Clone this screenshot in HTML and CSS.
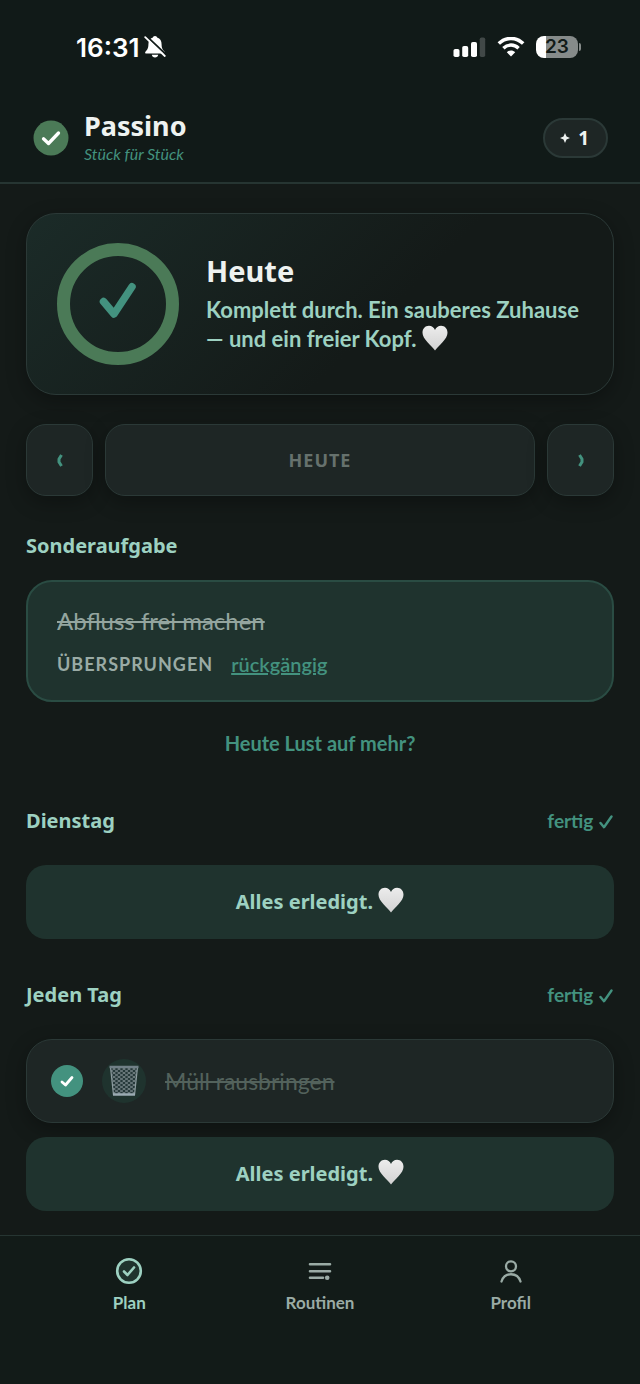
FILE: index.html
```html
<!DOCTYPE html>
<html lang="de">
<head>
    <meta charset="UTF-8">
    <meta name="viewport" content="width=device-width, initial-scale=1.0">
    <title>Passino</title>
    <link rel="stylesheet" href="styles.css">
</head>
<body>
    <!-- Shared shapes -->
    <svg class="defs" aria-hidden="true">
        <defs>
            <linearGradient id="heartFill" x1="0" y1="0" x2="0" y2="1">
                <stop offset="0" stop-color="#ececec"/>
                <stop offset="1" stop-color="#d2d2d2"/>
            </linearGradient>
            <pattern id="mesh" width="5" height="4" patternUnits="userSpaceOnUse">
                <path d="M0 0l5 4M5 0L0 4" stroke="#849296" stroke-width="0.800"/>
            </pattern>
            <symbol id="heart" viewBox="0 0 26 26">
                <path d="M13 25.500C12 23.800 8.500 20.800 5.500 17.300C2.500 13.900 0.500 10.900 0.500 7.700C0.500 3.600 3.300 0.800 6.900 0.800C9.800 0.800 12 2.500 13 4.900C14 2.500 16.200 0.800 19.100 0.800C22.700 0.800 25.500 3.600 25.500 7.700C25.500 10.900 23.500 13.900 20.500 17.300C17.500 20.800 14 23.800 13 25.500Z" fill="url(#heartFill)"/>
            </symbol>
            <symbol id="tick" viewBox="0 0 14 14">
                <path d="M1.500 8L5 12.200L12.500 1.500" fill="none" stroke="currentColor" stroke-width="2.400" stroke-linecap="round" stroke-linejoin="round"/>
            </symbol>
        </defs>
    </svg>

    <div class="status-bar">
        <div class="status-group">
            <span class="clock">16:31</span>
            <svg width="22" height="24" viewBox="0 0 22 24" aria-hidden="true">
                <path d="M11 1C9.600 1 9 1.800 8.900 2.600C5.700 3.500 4.400 6 4.400 9.500C4.400 14 2.700 15.200 1.400 16.700C0.800 17.600 1.200 18.500 2.300 18.500H19.700C20.800 18.500 21.200 17.600 20.600 16.700C19.300 15.200 17.600 14 17.600 9.500C17.600 6 16.300 3.500 13.100 2.600C13 1.800 12.400 1 11 1Z" fill="#fff"/>
                <path d="M7.800 19.700H14.200C13.900 21.500 12.700 22.500 11 22.500S8.100 21.500 7.800 19.700Z" fill="#fff"/>
                <path d="M2.600 1.200L22 19.600" stroke="#111a18" stroke-width="2"/>
                <path d="M1.200 2.200L20.800 21" stroke="#fff" stroke-width="1.800" stroke-linecap="round"/>
            </svg>
        </div>
        <div class="status-group status-right">
            <svg width="33" height="20" viewBox="0 0 33 20" aria-hidden="true">
                <rect x="0.500" y="12" width="6" height="8" rx="1.800" fill="#fff"/>
                <rect x="9.200" y="9" width="6" height="11" rx="1.800" fill="#fff"/>
                <rect x="18" y="5" width="6" height="15" rx="1.800" fill="#fff"/>
                <rect x="26.700" y="0.500" width="5.500" height="19.500" rx="1.800" fill="#414847"/>
            </svg>
            <svg width="28" height="20" viewBox="0 0 28 20" aria-hidden="true">
                <path d="M1.800 6.600C8.800 -0.300 19.200 -0.300 26.200 6.600" fill="none" stroke="#fff" stroke-width="3.500"/>
                <path d="M6.400 11.200C10.800 7 17.200 7 21.600 11.200" fill="none" stroke="#fff" stroke-width="3.400"/>
                <path d="M9.800 15.200C12.200 12.900 15.800 12.900 18.200 15.200L14 19.500Z" fill="#fff"/>
            </svg>
            <span class="battery"><span class="battery-level">23</span></span>
        </div>
    </div>

    <header class="app-header">
        <svg class="logo" width="36" height="36" viewBox="0 0 36 36" aria-hidden="true">
            <circle cx="18" cy="18" r="17.500" fill="#4b7a57"/>
            <path d="M10.500 18.800L15.500 23.500L25.500 13" fill="none" stroke="#fff" stroke-width="3.300" stroke-linecap="round" stroke-linejoin="round"/>
        </svg>
        <div class="brand">
            <h1>Passino</h1>
            <p>Stück für Stück</p>
        </div>
        <button class="points" type="button">
            <svg width="10" height="10" viewBox="0 0 10 10" aria-hidden="true">
                <path d="M5 0L6.500 3.500L10 5L6.500 6.500L5 10L3.500 6.500L0 5L3.500 3.500Z" fill="#eef2f0"/>
            </svg>
            1
        </button>
    </header>

    <main>
        <section class="hero">
            <svg class="ring" width="122" height="122" viewBox="0 0 122 122" aria-hidden="true">
                <circle cx="61" cy="61" r="54.500" fill="none" stroke="#4b7a57" stroke-width="13"/>
                <path d="M46.500 58.500L57 71L75 43.800" fill="none" stroke="#43927f" stroke-width="7.500" stroke-linecap="round" stroke-linejoin="round"/>
            </svg>
            <div>
                <h2>Heute</h2>
                <p>Komplett durch. Ein sauberes Zuhause — und ein freier Kopf. <svg class="heart" aria-label="Herz"><use href="#heart"/></svg></p>
            </div>
        </section>

        <div class="day-nav">
            <button class="arrow" type="button" aria-label="Vorheriger Tag">
                <svg width="8" height="16" viewBox="0 0 8 16" aria-hidden="true"><path d="M5.500 3L3 7V10L5.500 14" fill="none" stroke="currentColor" stroke-width="3" stroke-linejoin="round"/></svg>
            </button>
            <button class="today" type="button" disabled>HEUTE</button>
            <button class="arrow" type="button" aria-label="Nächster Tag">
                <svg width="8" height="16" viewBox="0 0 8 16" aria-hidden="true"><path d="M2.500 3L5 7V10L2.500 14" fill="none" stroke="currentColor" stroke-width="3" stroke-linejoin="round"/></svg>
            </button>
        </div>

        <section class="special">
            <h3>Sonderaufgabe</h3>
            <div class="special-card">
                <s>Abfluss frei machen</s>
                <div class="special-meta">
                    <span class="skipped">ÜBERSPRUNGEN</span>
                    <a href="#">rückgängig</a>
                </div>
            </div>
            <a class="more" href="#">Heute Lust auf mehr?</a>
        </section>

        <section class="group">
            <div class="group-head">
                <h3>Dienstag</h3>
                <span class="state">fertig <svg class="tick" aria-hidden="true"><use href="#tick"/></svg></span>
            </div>
            <p class="all-done">Alles erledigt. <svg class="heart" aria-label="Herz"><use href="#heart"/></svg></p>
        </section>

        <section class="group">
            <div class="group-head">
                <h3>Jeden Tag</h3>
                <span class="state">fertig <svg class="tick" aria-hidden="true"><use href="#tick"/></svg></span>
            </div>
            <label class="task">
                <span class="check">
                    <input type="checkbox" checked>
                    <svg width="14" height="14" viewBox="0 0 14 14" aria-hidden="true"><path d="M2 8L5.500 11L12 3.500" fill="none" stroke="#fff" stroke-width="2.800" stroke-linecap="round" stroke-linejoin="round"/></svg>
                </span>
                <span class="task-icon">
                    <svg width="30" height="32" viewBox="0 0 30 32" aria-hidden="true">
                        <path d="M1.500 2H28.500L25.500 30H4.500Z" fill="#26393a"/>
                        <path d="M1.500 2H28.500L25.500 30H4.500Z" fill="url(#mesh)"/>
                        <path d="M1.500 2L4.500 30M28.500 2L25.500 30" stroke="#8d9ca0" stroke-width="1.200"/>
                        <path d="M0.500 2H29.500" stroke="#718087" stroke-width="2.500"/>
                        <path d="M4 29.500H26" stroke="#9babb3" stroke-width="2.500"/>
                    </svg>
                </span>
                <s>Müll rausbringen</s>
            </label>
            <p class="all-done">Alles erledigt. <svg class="heart" aria-label="Herz"><use href="#heart"/></svg></p>
        </section>
    </main>

    <nav class="tab-bar">
        <a class="tab active" href="#">
            <svg width="28" height="28" viewBox="0 0 28 28" fill="none" stroke="currentColor" stroke-linecap="round" stroke-linejoin="round" aria-hidden="true">
                <circle cx="14" cy="14" r="11.800" fill="#1f332e" stroke-width="2.600"/>
                <path d="M9 14.500L12.500 18L19 10.500" stroke-width="2.600"/>
            </svg>
            Plan
        </a>
        <a class="tab" href="#">
            <svg width="28" height="28" viewBox="0 0 28 28" fill="none" stroke="currentColor" stroke-linecap="round" aria-hidden="true">
                <path d="M4 7.300H24M4 14.200H24M4 20.700H17" stroke-width="2.600"/>
                <circle cx="21.200" cy="20.700" r="2.300" fill="currentColor" stroke="none"/>
            </svg>
            Routinen
        </a>
        <a class="tab" href="#">
            <svg width="28" height="28" viewBox="0 0 28 28" fill="none" stroke="currentColor" stroke-linecap="round" aria-hidden="true">
                <circle cx="14" cy="9.300" r="5" stroke-width="2.300"/>
                <path d="M4.500 24.500C7.500 14.800 20.500 14.800 23.500 24.500" stroke-width="2.300"/>
            </svg>
            Profil
        </a>
    </nav>
</body>
</html>
```
FILE: styles.css
```css
* {
    box-sizing: border-box;
}
body {
    display: flex;
    flex-direction: column;
    min-height: 100vh;
    margin: 0;
    background-color: #141a18;
    color: #eef2f0;
    font-family: Lato, "Noto Sans", sans-serif;
    font-size: 22px;
}
h1, h2, h3, p {
    margin: 0;
}
h1, h2, h3, .today, .all-done {
    font-family: "Noto Sans", sans-serif;
    font-weight: 700;
}
button {
    font-family: inherit;
    color: inherit;
}
svg {
    flex: none;
}
.defs {
    position: absolute;
    width: 0;
    height: 0;
}
.heart {
    width: 26px;
    height: 26px;
    vertical-align: -4px;
}

/* Status bar */
.status-bar {
    display: flex;
    justify-content: space-between;
    align-items: center;
    height: 94px;
    padding: 0 59px 0 76px;
    background-color: #111a18;
}
.status-group {
    display: flex;
    align-items: center;
    gap: 5px;
}
.status-right {
    gap: 11px;
}
.clock {
    font-family: Inter, sans-serif;
    font-size: 26px;
    font-weight: 600;
    color: #fff;
}
.battery {
    display: flex;
    align-items: center;
    gap: 1px;
}
.battery::after {
    content: "";
    width: 2px;
    height: 8px;
    border-radius: 0 4px 4px 0;
    background-color: #868b8a;
}
.battery-level {
    width: 42px;
    border-radius: 8px;
    background: linear-gradient(to right, #fff 23%, #868b8a 23%);
    color: #111a18;
    font-family: Inter, sans-serif;
    font-size: 19px;
    font-weight: 600;
    line-height: 22px;
    text-align: center;
}

/* Header */
.app-header {
    display: flex;
    align-items: center;
    gap: 15px;
    height: 90px;
    padding: 0 32px 0 33px;
    border-bottom: 2px solid #263532;
    background-color: #111a18;
}
.brand {
    flex: 1;
}
.brand h1 {
    font-size: 27px;
    line-height: 32px;
}
.brand p {
    color: #43927f;
    font-size: 16px;
    font-style: italic;
    line-height: 24px;
}
.points {
    display: flex;
    align-items: center;
    gap: 8px;
    height: 40px;
    padding: 0 17px 0 15px;
    border: 2px solid #2b3937;
    border-radius: 20px;
    background-color: #1e2625;
    font-family: "Noto Sans", sans-serif;
    font-size: 19px;
    font-weight: 700;
}

/* Content */
main {
    flex: 1;
    padding: 29px 26px 24px;
}
.hero {
    display: flex;
    align-items: center;
    gap: 27px;
    padding: 29px 30px;
    border: 1px solid #2b3937;
    border-radius: 30px;
    background: linear-gradient(135deg, #1b2b28, #141a18 60%);
    box-shadow: 0 6px 20px rgba(0, 0, 0, 0.3);
}
.hero h2 {
    margin-bottom: 8px;
    font-size: 29px;
    line-height: 32px;
}
.hero p {
    color: #9dd1c1;
    font-weight: 700;
    line-height: 29px;
}
.day-nav {
    display: flex;
    gap: 12px;
    margin-top: 29px;
}
.day-nav button {
    display: flex;
    align-items: center;
    justify-content: center;
    height: 72px;
    border: 1px solid #2b3937;
    border-radius: 20px;
    background-color: #1e2625;
    box-shadow: 0 6px 20px rgba(0, 0, 0, 0.3);
}
.day-nav .arrow {
    width: 67px;
    color: #43927f;
}
.day-nav .today {
    flex: 1;
    color: #66716d;
    font-size: 18px;
    letter-spacing: 1px;
}
h3 {
    color: #9dd1c1;
    font-size: 20px;
    line-height: 28px;
}
.special {
    display: flex;
    flex-direction: column;
    margin-top: 36px;
}
.special-card {
    margin-top: 20px;
    padding: 24px 29px;
    border: 2px solid #2a4c43;
    border-radius: 26px;
    background-color: #1f332e;
}
.special-card s {
    display: block;
    color: #94a59f;
    font-size: 24px;
    line-height: 30px;
}
.special-meta {
    display: flex;
    gap: 18px;
    margin-top: 16px;
    line-height: 24px;
}
.skipped {
    color: #9aaba5;
    font-size: 18px;
    font-weight: 700;
    letter-spacing: 1px;
}
.special-meta a {
    color: #43927f;
    font-size: 20px;
    font-weight: 600;
}
.more {
    align-self: center;
    margin-top: 27px;
    color: #43927f;
    font-size: 20px;
    font-weight: 700;
    line-height: 28px;
    text-decoration: none;
}
.group {
    margin-top: 42px;
}
.special + .group {
    margin-top: 50px;
}
.group-head {
    display: flex;
    justify-content: space-between;
    align-items: center;
    margin-bottom: 30px;
}
.state {
    color: #43927f;
    font-size: 19px;
    font-weight: 700;
    line-height: 28px;
}
.tick {
    width: 16px;
    height: 14px;
    vertical-align: -1px;
}
.all-done {
    padding: 22px;
    border-radius: 20px;
    background-color: #1f332e;
    color: #9dd1c1;
    font-size: 20px;
    line-height: 30px;
    text-align: center;
}
.task {
    display: flex;
    align-items: center;
    height: 84px;
    margin-bottom: 14px;
    padding: 0 24px;
    border: 1px solid #2b3937;
    border-radius: 26px;
    background-color: #1e2625;
    box-shadow: 0 6px 20px rgba(0, 0, 0, 0.3);
}
.task s {
    color: #53625c;
    font-size: 23px;
}
.check {
    display: grid;
    place-items: center;
    margin-right: 19px;
}
.check input, .check svg {
    grid-area: 1 / 1;
}
.check input {
    width: 32px;
    height: 32px;
    margin: 0;
    border-radius: 50%;
    background-color: #43927f;
    appearance: none;
}
.check svg {
    z-index: 1;
    pointer-events: none;
}
.task-icon {
    display: grid;
    place-items: center;
    width: 44px;
    height: 44px;
    margin-right: 19px;
    border-radius: 50%;
    background-color: #1f332e;
}

/* Tab bar */
.tab-bar {
    display: grid;
    grid-template-columns: repeat(3, 1fr);
    align-items: start;
    min-height: 149px;
    padding: 21px 34px 0;
    border-top: 1px solid #263532;
    background-color: #121b18;
}
.tab {
    display: flex;
    flex-direction: column;
    align-items: center;
    gap: 6px;
    color: #9aaba5;
    font-size: 17px;
    font-weight: 700;
    line-height: 24px;
    text-decoration: none;
}
.tab.active {
    color: #9dd1c1;
}
```
